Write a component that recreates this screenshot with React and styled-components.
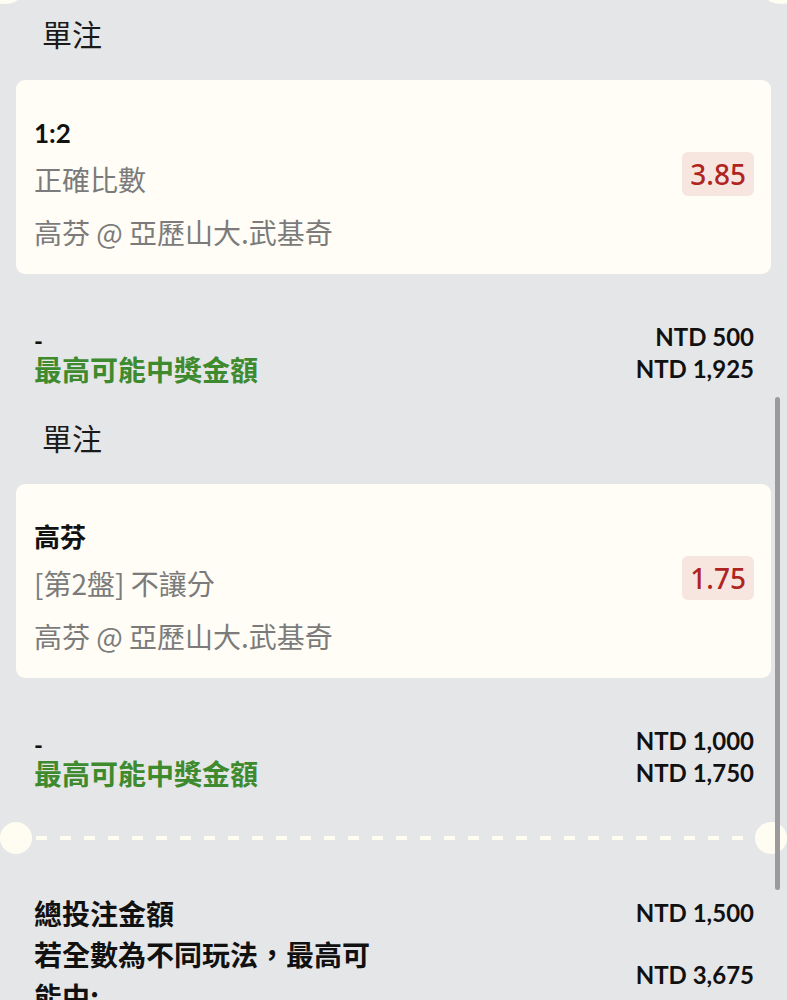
import React from "react";
import styled, { createGlobalStyle } from "styled-components";

const Global = createGlobalStyle`
  html, body { margin: 0; padding: 0; background: #e5e6e8; }
  body { font-family: "Lato", "Noto Sans CJK TC", sans-serif; color: #111; }
  * { box-sizing: border-box; }
`;

const Page = styled.div`
  position: relative;
  width: 787px;
  min-height: 1000px;
  background: #e5e6e8;
  overflow: hidden;
  padding-top: 10px;
`;

const TopNotch = styled.div`
  position: absolute;
  top: -12px;
  width: 32px;
  height: 16px;
  border-radius: 50%;
  background: #fffdf2;
  left: ${(p) => p.$left}px;
`;

const Scrollbar = styled.div`
  position: absolute;
  left: 775px;
  top: 397px;
  width: 5px;
  height: 493px;
  border-radius: 3px;
  background: #9b9b9d;
`;

const Section = styled.section`
  display: flex;
  flex-direction: column;
`;

const Heading = styled.h2`
  margin: 0;
  padding-left: 42px;
  font-family: "Noto Sans CJK TC", sans-serif;
  font-weight: 400;
  font-size: 30px;
  line-height: 46px;
  color: #1a1a1a;
`;

const Card = styled.div`
  margin: 24px 16px 0;
  height: 194px;
  background: #fffdf5;
  border-radius: 9px;
  padding: 33px 17px 16px 18px;
  display: flex;
  align-items: center;
  justify-content: space-between;
`;

const CardText = styled.div`
  display: flex;
  flex-direction: column;
  align-self: flex-start;
`;

const Title = styled.div`
  font-family: "Lato", "Noto Sans CJK TC", sans-serif;
  font-weight: 700;
  font-size: 26px;
  line-height: 40px;
  color: #111;
`;

const SubLine = styled.div`
  font-family: "Noto Sans CJK TC", sans-serif;
  font-weight: 400;
  font-size: 28px;
  line-height: ${(p) => p.$lh}px;
  color: #7b7b7b;
  white-space: nowrap;
`;

const Odds = styled.div`
  background: #f7e6df;
  border-radius: 6px;
  padding: 0 8px;
  height: 44px;
  display: flex;
  align-items: center;
  font-family: "Noto Sans", "Roboto", sans-serif;
  font-weight: 500;
  font-size: 28px;
  color: #b0241f;
  margin-bottom: 23px;
`;

const Summary = styled.div`
  margin-top: 47px;
  padding: 0 33px 0 34px;
  display: grid;
  grid-template-columns: 1fr auto;
  grid-auto-rows: 32px;
  align-items: center;
`;

const Dash = styled.div`
  font-family: "Lato", sans-serif;
  font-weight: 700;
  font-size: 24px;
  line-height: 20px;
  align-self: end;
  margin-bottom: 2px;
`;

const Green = styled.div`
  font-family: "Noto Sans CJK TC", sans-serif;
  font-weight: 700;
  font-size: 28px;
  line-height: 32px;
  color: #3e8a2e;
`;

const Amount = styled.div`
  font-family: "Lato", sans-serif;
  font-weight: 700;
  font-size: 24px;
  line-height: 32px;
  text-align: right;
  color: #111;
`;

const SectionGap = styled.div`
  height: 29px;
`;

const Separator = styled.div`
  margin-top: 33px;
  display: flex;
  align-items: center;
  height: 32px;
`;

const Notch = styled.div`
  width: 32px;
  height: 32px;
  border-radius: 50%;
  background: #fffdf2;
  flex: none;
`;

const DashedLine = styled.div`
  flex: 1;
  height: 4px;
  margin: 0 3px 0 4px;
  background: repeating-linear-gradient(
    to right,
    #fffdf2 0 11px,
    transparent 11px 24px
  );
`;

const Totals = styled.div`
  margin-top: 39px;
  padding: 0 33px 0 34px;
  display: grid;
  grid-template-columns: 340px 1fr;
  align-items: center;
`;

const TotalLabel = styled.div`
  font-family: "Noto Sans CJK TC", sans-serif;
  font-weight: 700;
  font-size: 28px;
  line-height: ${(p) => p.$lh}px;
  color: #111;
`;

const sections = [
  {
    title: "1:2",
    market: "正確比數",
    odds: "3.85",
    stake: "NTD 500",
    win: "NTD 1,925",
  },
  {
    title: "高芬",
    market: "[第2盤] 不讓分",
    odds: "1.75",
    stake: "NTD 1,000",
    win: "NTD 1,750",
  },
];

export default function App() {
  return (
    <>
      <Global />
      <Page>
        <TopNotch $left={-12} />
        <TopNotch $left={766} />
        {sections.map((s, i) => (
          <Section key={i}>
            {i > 0 && <SectionGap />}
            <Heading>單注</Heading>
            <Card>
              <CardText>
                <Title>{s.title}</Title>
                <SubLine $lh={52}>{s.market}</SubLine>
                <SubLine $lh={54}>高芬 @ 亞歷山大.武基奇</SubLine>
              </CardText>
              <Odds>{s.odds}</Odds>
            </Card>
            <Summary>
              <Dash>-</Dash>
              <Amount>{s.stake}</Amount>
              <Green>最高可能中獎金額</Green>
              <Amount>{s.win}</Amount>
            </Summary>
          </Section>
        ))}
        <Separator>
          <Notch />
          <DashedLine />
          <Notch />
        </Separator>
        <Totals>
          <TotalLabel $lh={40}>總投注金額</TotalLabel>
          <Amount>NTD 1,500</Amount>
          <TotalLabel $lh={42}>若全數為不同玩法，最高可能中:</TotalLabel>
          <Amount>NTD 3,675</Amount>
        </Totals>
        <Scrollbar />
      </Page>
    </>
  );
}
